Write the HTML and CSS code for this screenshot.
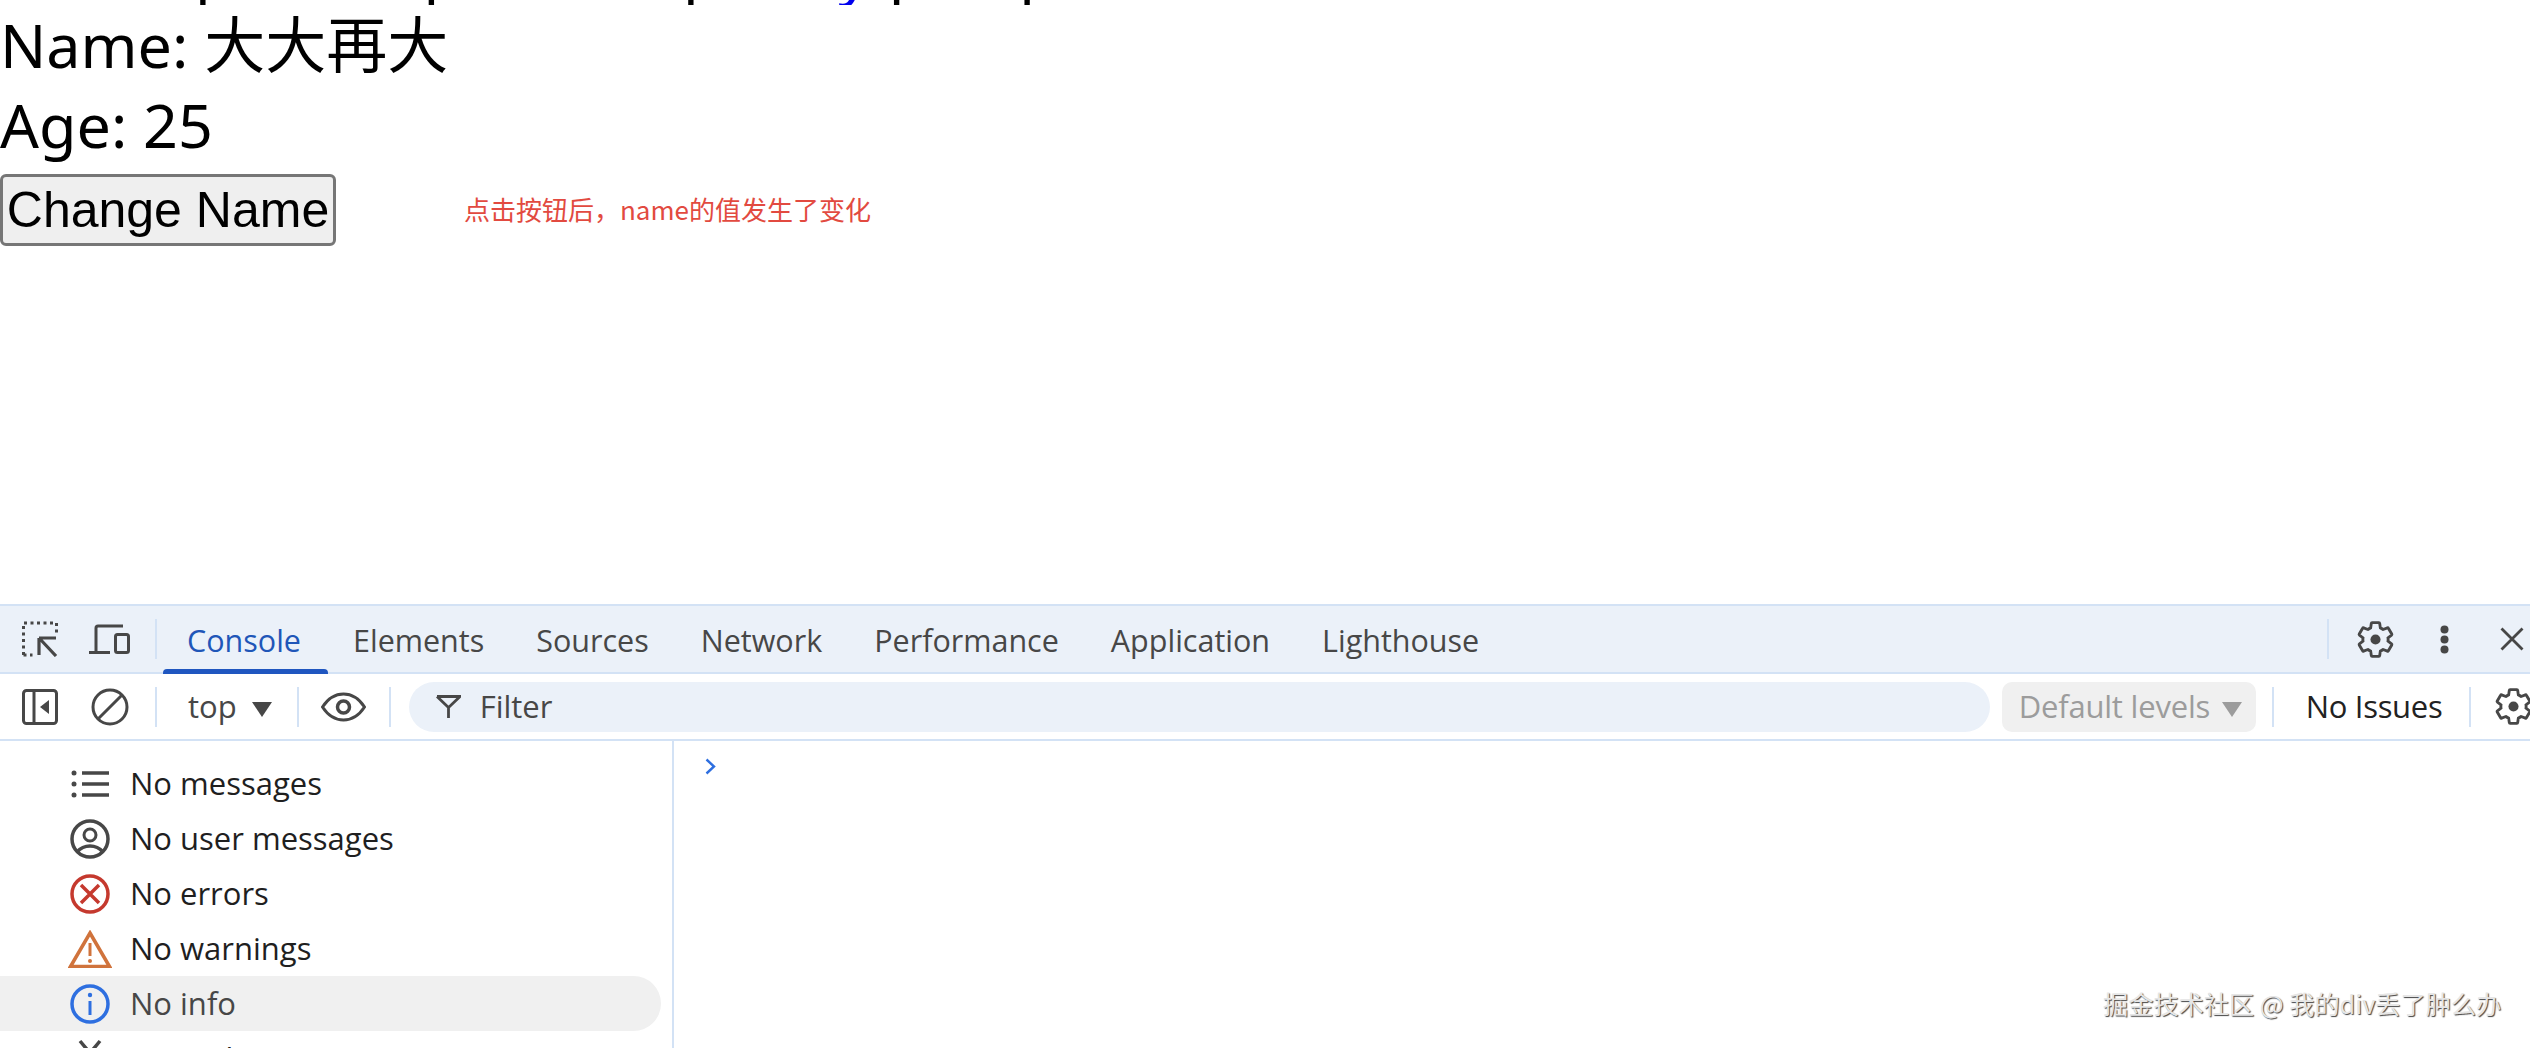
FILE: index.html
```html
<!DOCTYPE html>
<html lang="zh">
<head>
<meta charset="utf-8">
<title>DevTools</title>
<link rel="stylesheet" href="styles.css">
</head>
<body>
<main class="page">
  <div class="clip"><div class="cutline"><span class="d1">p</span><span class="d2">p</span><span class="d3">p</span><span class="d4 blue">y</span><span class="d5">p</span><span class="d6">p</span></div></div>
  <p class="big">Name: 大大再大</p>
  <p class="big">Age: 25</p>
  <div class="action">
    <button class="btn">Change Name</button>
    <span class="note">点击按钮后，name的值发生了变化</span>
  </div>
</main>
<section class="devtools">
  <div class="tabbar">
    <svg class="i36 lead" viewBox="0 0 36 36"><path d="M1.500 34V2h33v13" fill="none" stroke="#474747" stroke-width="3" stroke-dasharray="3 3.500"/><path d="M1.500 34h9" fill="none" stroke="#474747" stroke-width="3" stroke-dasharray="3 3.500"/><path d="M17 17h17M17 17v17M18 18 34 35" fill="none" stroke="#474747" stroke-width="3.200"/></svg>
    <svg class="device" viewBox="0 0 41 30"><path d="M7 27V4a2 2 0 0 1 2-2h25M0 28.500h21" fill="none" stroke="#474747" stroke-width="3"/><rect x="26.500" y="10.500" width="13" height="18" rx="2" fill="none" stroke="#474747" stroke-width="3"/></svg>
    <i class="sep sepa"></i>
    <div class="tabs">
      <span class="tab active">Console</span><span class="tab">Elements</span><span class="tab">Sources</span><span class="tab">Network</span><span class="tab">Performance</span><span class="tab">Application</span><span class="tab">Lighthouse</span>
    </div>
    <i class="sep sepr"></i>
    <svg class="gear g1" viewBox="1 1 22 22"><use href="#gear"/></svg>
    <svg class="dots" viewBox="0 0 9 29"><circle cx="4.500" cy="4.500" r="4"/><circle cx="4.500" cy="14.500" r="4"/><circle cx="4.500" cy="24.500" r="4"/></svg>
    <svg class="close" viewBox="0 0 24 24"><path d="M1.500 1.500 22.500 22.500M22.500 1.500 1.500 22.500" stroke="#474747" stroke-width="2.800"/></svg>
  </div>
  <div class="toolbar">
    <svg class="i36 lead" viewBox="0 0 36 36"><rect x="1.500" y="1.500" width="33" height="33" rx="3" fill="none" stroke="#474747" stroke-width="3"/><path d="M12 2v32" stroke="#474747" stroke-width="3"/><path d="M27 11v14l-9-7z" fill="#474747"/></svg>
    <svg class="block" viewBox="0 0 38 38"><circle cx="19" cy="19" r="17" fill="none" stroke="#474747" stroke-width="3"/><path d="M7 31 31 7" stroke="#474747" stroke-width="3"/></svg>
    <i class="sep sepa"></i>
    <span class="top tx">top</span><i class="caret"></i>
    <i class="sep sepb"></i>
    <svg class="eye" viewBox="0 0 45 30"><path d="M1.500 15C8 5 14.500 2 22.500 2s14.500 3 21 13c-6.500 10-13 13-21 13S8 25 1.500 15z" fill="none" stroke="#474747" stroke-width="3"/><circle cx="22.500" cy="15" r="6" fill="none" stroke="#474747" stroke-width="3.500"/></svg>
    <i class="sep sepc"></i>
    <div class="filter">
      <svg class="funnel" viewBox="0 0 25 23"><path d="M1 1.500h23l-11.500 11v10.500M12.500 12.500 1 1.500" fill="none" stroke="#474747" stroke-width="2.800"/></svg>
      <span class="tx">Filter</span>
    </div>
    <div class="levels"><span class="tx">Default levels</span><i class="caret grey"></i></div>
    <i class="sep sepd"></i>
    <span class="issues tx">No Issues</span>
    <i class="sep sepe"></i>
    <svg class="gear g2" viewBox="1 1 22 22"><use href="#gear"/></svg>
  </div>
  <div class="body">
    <aside class="side">
      <div class="row"><svg class="ri" viewBox="0 0 40 40"><path d="M12 9h27M12 20h27M12 31h27" stroke="#474747" stroke-width="3.500"/><circle cx="4" cy="9" r="2.500" fill="#474747"/><circle cx="4" cy="20" r="2.500" fill="#474747"/><circle cx="4" cy="31" r="2.500" fill="#474747"/></svg><span class="tx">No messages</span></div>
      <div class="row"><svg class="ri" viewBox="0 0 40 40"><circle cx="20" cy="20" r="18" fill="none" stroke="#474747" stroke-width="3.500"/><circle cx="20" cy="16" r="6" fill="none" stroke="#474747" stroke-width="3"/><path d="M7 33c7-8 19-8 26 0" fill="none" stroke="#474747" stroke-width="3.500"/></svg><span class="tx">No user messages</span></div>
      <div class="row"><svg class="ri" viewBox="0 0 40 40"><circle cx="20" cy="20" r="18" fill="none" stroke="#c5392e" stroke-width="3.500"/><path d="M11 11 29 29M29 11 11 29" stroke="#c5392e" stroke-width="3.500"/></svg><span class="tx">No errors</span></div>
      <div class="row"><svg class="ri wide" viewBox="0 0 44 38"><path d="M22 3 41.500 36.500h-39z" fill="none" stroke="#d0733c" stroke-width="3.500"/><path d="M22 13v13" stroke="#d0733c" stroke-width="3"/><circle cx="22" cy="31" r="2" fill="#d0733c"/></svg><span class="tx">No warnings</span></div>
      <div class="row selected"><svg class="ri" viewBox="0 0 40 40"><circle cx="20" cy="20" r="18" fill="none" stroke="#2e6fe0" stroke-width="3.500"/><path d="M20 17v14" stroke="#2e6fe0" stroke-width="3"/><circle cx="20" cy="11" r="2.200" fill="#2e6fe0"/></svg><span class="tx">No info</span></div>
      <div class="row"><svg class="ri" viewBox="0 0 40 40"><path d="M10 2 30 26M30 2 10 26" stroke="#474747" stroke-width="3.500"/></svg><span class="tx">No verbose</span></div>
    </aside>
    <div class="console">
      <svg class="prompt" viewBox="0 0 11 17"><path d="M1.500 1.500 9 8.500l-7.500 7" fill="none" stroke="#2e6fe0" stroke-width="2.400"/></svg>
    </div>
  </div>
</section>
<div class="mark">掘金技术社区 @ 我的div丢了肿么办</div>
<svg class="defs" aria-hidden="true"><defs><g id="gear"><path d="M19.430 12.980c.04-.32.07-.64.07-.98 0-.34-.03-.66-.07-.98l2.110-1.650c.19-.15.24-.42.12-.64l-2-3.460c-.12-.22-.39-.3-.61-.22l-2.490 1c-.52-.4-1.080-.73-1.690-.98l-.38-2.650C14.460 2.180 14.250 2 14 2h-4c-.25 0-.46.18-.49.42l-.38 2.650c-.61.25-1.170.59-1.690.98l-2.490-1c-.23-.09-.49 0-.61.22l-2 3.460c-.13.22-.07.49.12.64l2.110 1.650c-.04.32-.07.65-.07.98 0 .33.03.66.07.98l-2.110 1.650c-.19.15-.24.42-.12.64l2 3.460c.12.22.39.3.61.22l2.490-1c.52.4 1.080.73 1.690.98l.38 2.650c.03.24.24.42.49.42h4c.25 0 .46-.18.49-.42l.38-2.650c.61-.25 1.170-.59 1.690-.98l2.490 1c.23.09.49 0 .61-.22l2-3.460c.12-.22.07-.49-.12-.64l-2.110-1.650z" fill="none" stroke="#474747" stroke-width="1.700"/><circle cx="12" cy="12" r="3" fill="#474747"/></g></defs></svg>
</body>
</html>
```
FILE: styles.css
```css
* { box-sizing: border-box; }
html, body { margin: 0; height: 100%; overflow: hidden; background: #fff; }
body { width: 2530px; height: 1048px; display: flex; flex-direction: column; position: relative; font-family: "Open Sans", "Noto Sans CJK SC", sans-serif; }
svg { display: block; flex: none; }
.defs { position: absolute; width: 0; height: 0; }
.tx { padding-bottom: 2px; }

.page { height: 604px; flex: none; overflow: hidden; font-family: "Noto Sans", "Noto Sans CJK SC", sans-serif; color: #000; }
.clip { height: 5px; overflow: hidden; }
.cutline { display: flex; font-size: 61px; line-height: 80px; height: 80px; margin-top: -69px; }
.cutline span { flex: none; }
.d1 { margin-left: 195px; }
.d2 { margin-left: 191px; }
.d3 { margin-left: 222px; }
.d4 { margin-left: 118px; }
.d5 { margin-left: 19px; }
.d6 { margin-left: 93px; }
.blue { color: #0000ee; }
.big { margin: 0; font-size: 61px; line-height: 80px; height: 80px; white-space: nowrap; }
.action { display: flex; align-items: center; height: 72px; margin-top: 9px; }
.btn { flex: none; width: 336px; height: 72px; padding: 0; border: 3px solid #767676; border-radius: 6px; background: #efefef; color: #000; font: 50px "Liberation Sans", sans-serif; white-space: nowrap; }
.note { margin-left: 128px; padding-bottom: 3px; font: 26px "Noto Sans CJK SC", sans-serif; color: #e24a40; white-space: nowrap; }

.devtools { flex: 1; display: flex; flex-direction: column; min-height: 0; color: #474747; }
.tabbar { height: 70px; flex: none; display: flex; align-items: center; background: #ebf1f9; border-top: 2px solid #d3e2f5; border-bottom: 2px solid #d3e2f5; }
.sep { display: block; flex: none; width: 2px; height: 40px; background: #d3e2f5; }
.i36 { width: 36px; height: 36px; }
.lead { margin-left: 22px; }
.device { width: 41px; height: 30px; margin-left: 31px; }
.tabbar .sepa { margin-left: 25px; }
.tabs { display: flex; height: 100%; margin-left: 4px; }
.tab { display: flex; align-items: center; padding: 1px 26px 0; font-size: 30.500px; position: relative; white-space: nowrap; }
.tab.active { color: #1f56b8; }
.tab.active::after { content: ""; position: absolute; left: 2px; right: -1px; bottom: -2px; height: 5px; background: #1f56c0; border-radius: 4px 4px 0 0; }
.sepr { margin-left: auto; }
.gear { width: 37px; height: 37px; }
.g1 { margin-left: 28px; }
.dots { width: 9px; height: 29px; fill: #474747; margin-left: 46px; }
.close { width: 24px; height: 24px; margin-left: 51px; margin-right: 6px; }

.toolbar { height: 67px; flex: none; display: flex; align-items: center; background: #fff; border-bottom: 2px solid #d3e2f5; }
.block { width: 38px; height: 38px; margin-left: 33px; }
.toolbar .sepa { margin-left: 26px; }
.top { font-size: 31px; margin-left: 31px; }
.caret { display: block; flex: none; width: 0; height: 0; margin-left: 15px; border-left: 10px solid transparent; border-right: 10px solid transparent; border-top: 15px solid #474747; margin-top: 6px; }
.sepb { margin-left: 25px; }
.eye { width: 45px; height: 30px; margin-left: 22px; }
.sepc { margin-left: 23px; }
.filter { flex: none; width: 1581px; height: 50px; margin-left: 18px; display: flex; align-items: center; background: #ebf1f9; border-radius: 25px; font-size: 31px; padding-left: 27px; }
.funnel { width: 25px; height: 23px; margin-right: 19px; }
.levels { flex: none; width: 254px; height: 50px; margin-left: 12px; background: #f0f0f0; border-radius: 10px; display: flex; align-items: center; padding-left: 17px; color: #9c9c9c; font-size: 31px; white-space: nowrap; letter-spacing: -.2px; }
.grey { border-top-color: #9c9c9c; margin-left: 12px; }
.sepd { margin-left: 16px; }
.issues { font-size: 31px; color: #222; margin-left: 32px; white-space: nowrap; letter-spacing: -.3px; }
.sepe { margin-left: 27px; }
.g2 { margin-left: 24px; }

.body { flex: 1; min-height: 0; display: flex; overflow: hidden; }
.side { width: 674px; flex: none; padding: 15px 11px 0 0; border-right: 2px solid #d3e2f5; }
.row { height: 55px; display: flex; align-items: center; font-size: 31px; color: #1f1f1f; padding-left: 70px; white-space: nowrap; border-radius: 0 28px 28px 0; }
.row.selected { background: #f0f0f0; color: #474747; }
.ri { width: 40px; height: 40px; margin-right: 20px; }
.ri.wide { width: 44px; height: 38px; margin: 0 18px 0 -2px; }
.console { flex: 1; padding: 17px 0 0 31px; }
.prompt { width: 11px; height: 17px; }

.mark { position: absolute; left: 2103px; top: 985px; font: 25.200px "Noto Sans CJK SC", sans-serif; color: #e6e6e6; text-shadow: 1px 1px 1px #444; white-space: nowrap; }
```
